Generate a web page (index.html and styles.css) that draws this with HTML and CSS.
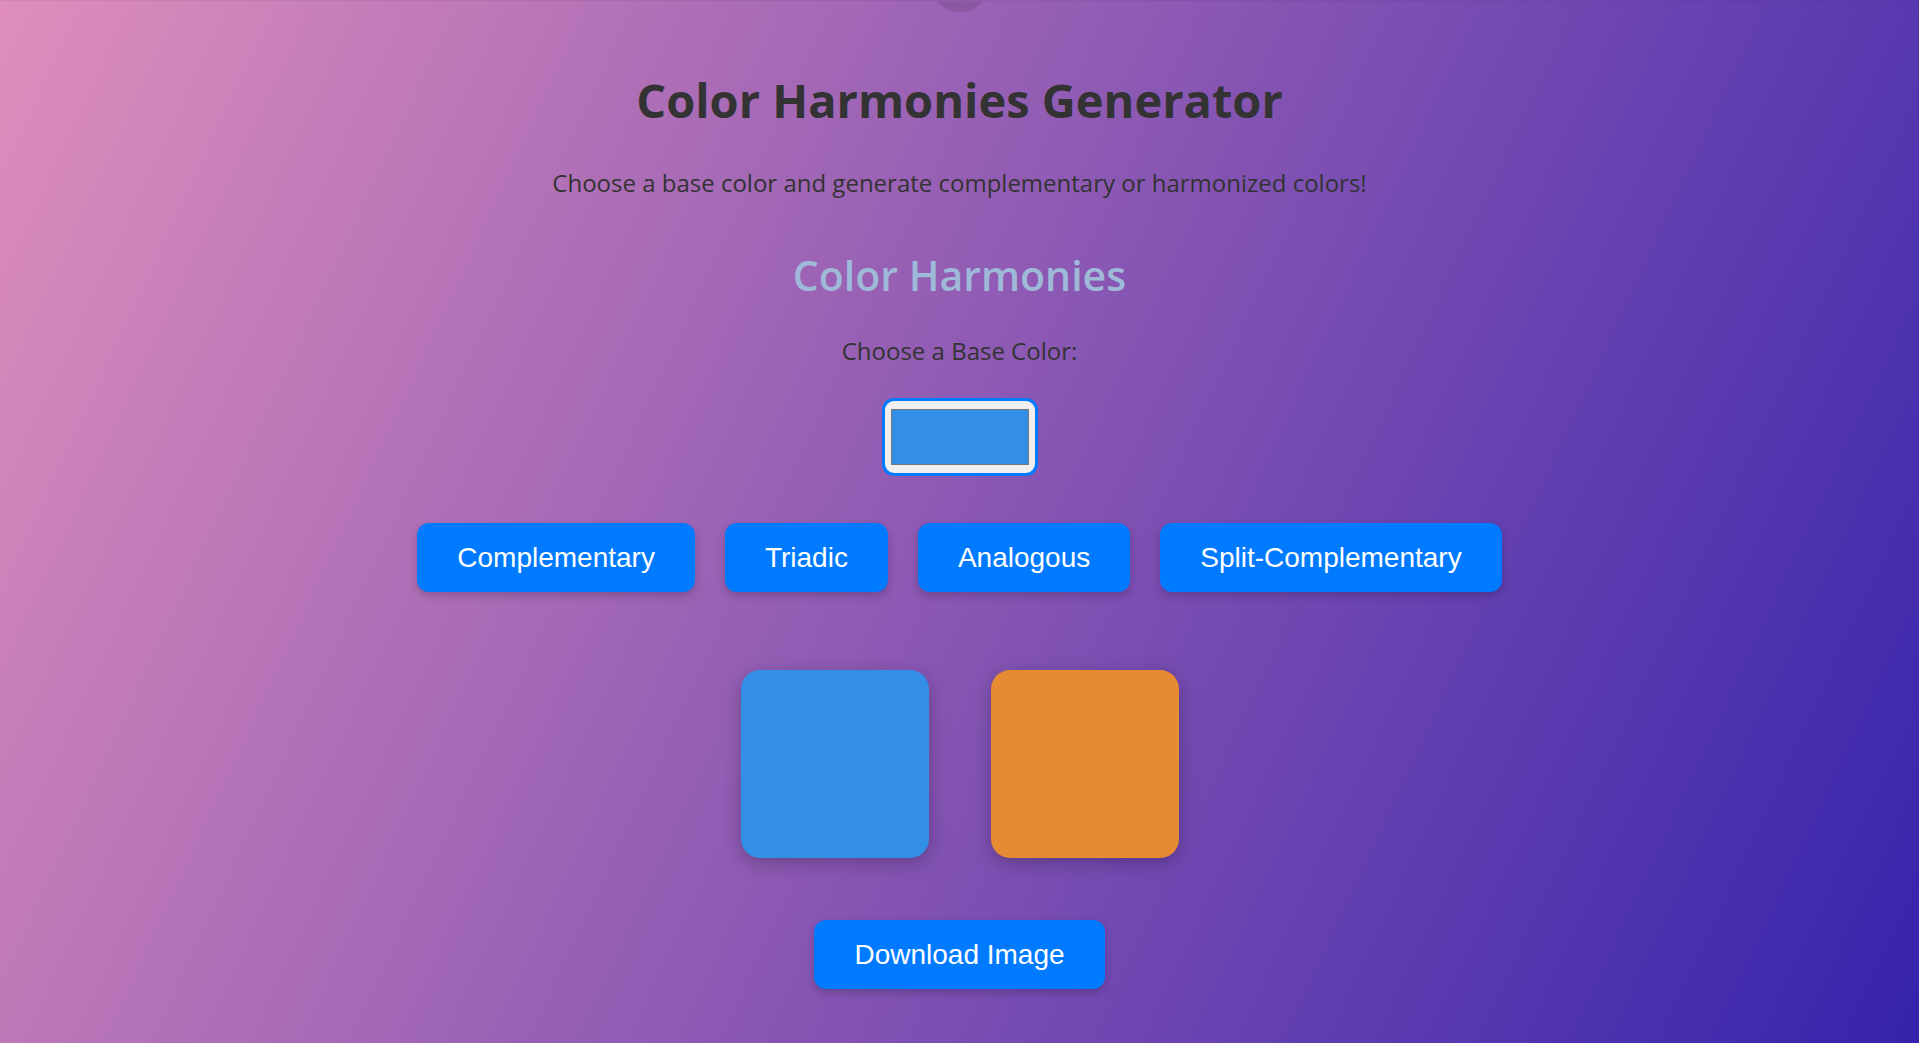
FILE: index.html
```html
<!DOCTYPE html>
<html lang="en">
<head>
  <meta charset="utf-8">
  <meta name="viewport" content="width=device-width, initial-scale=1">
  <title>Color Harmonies Generator</title>
  <link rel="stylesheet" href="styles.css">
</head>
<body>
  <span class="top-dot"></span>
  <main class="page">
    <h1 class="title">Color Harmonies Generator</h1>
    <p class="intro">Choose a base color and generate complementary or harmonized colors!</p>
    <h2 class="subtitle">Color Harmonies</h2>
    <label class="picker-label" for="base-color">Choose a Base Color:</label>
    <input class="picker" type="color" id="base-color" value="#338fe6">
    <div class="actions">
      <button class="button" type="button">Complementary</button>
      <button class="button" type="button">Triadic</button>
      <button class="button" type="button">Analogous</button>
      <button class="button" type="button">Split-Complementary</button>
    </div>
    <div class="palette">
      <div class="swatch swatch-base"></div>
      <div class="swatch swatch-complement"></div>
    </div>
    <button class="button" type="button">Download Image</button>
  </main>
</body>
</html>
```

FILE: styles.css
```css
* {
  box-sizing: border-box;
}

body {
  position: relative;
  min-height: 100vh;
  margin: 0;
  overflow-x: hidden;
  border-top: 1px solid rgba(0, 0, 0, 0.05);
  background: linear-gradient(115deg, #df8ebb, #8e5ab4 48%, #3523ac) border-box;
  color: #333;
  font-family: "Segoe UI", "Open Sans", sans-serif;
  font-size: 24px;
  line-height: 38px;
}

.top-dot {
  position: absolute;
  top: -49px;
  left: 50%;
  width: 60px;
  height: 60px;
  margin-left: -30px;
  border-radius: 50%;
  background: rgba(0, 0, 0, 0.1);
}

.page {
  display: flex;
  flex-direction: column;
  align-items: center;
  padding: 61px 24px 50px;
  text-align: center;
}

.title {
  margin: 0 0 26px;
  font-size: 47px;
  font-weight: 700;
  line-height: 76px;
}

.intro {
  margin: 0 0 37px;
}

.subtitle {
  margin: 0 0 21px;
  color: #9fb9d8;
  font-size: 41px;
  font-weight: 600;
  line-height: 72px;
}

.picker-label {
  margin-bottom: 28px;
}

.picker {
  width: 156px;
  height: 78px;
  margin-bottom: 47px;
  padding: 4px;
  border: 3px solid #007bff;
  border-radius: 12px;
  background: #efefef;
  cursor: pointer;
}

.actions {
  display: flex;
  flex-wrap: wrap;
  justify-content: center;
  gap: 30px;
  margin-bottom: 78px;
}

.button {
  padding: 18px 40px;
  border: 0;
  border-radius: 12px;
  background: #007bff;
  box-shadow: 0 4px 8px rgba(0, 0, 0, 0.2);
  color: #fff;
  font-family: Arial, "Liberation Sans", sans-serif;
  font-size: 28px;
  line-height: 33px;
  cursor: pointer;
}

.palette {
  display: flex;
  flex-wrap: wrap;
  justify-content: center;
  gap: 62px;
  margin-bottom: 62px;
}

.swatch {
  width: 188px;
  height: 188px;
  border-radius: 19px;
  box-shadow: 0 5px 18px rgba(0, 0, 0, 0.25);
}

.swatch-base {
  background: #338fe6;
}

.swatch-complement {
  background: #e68a33;
}
```
